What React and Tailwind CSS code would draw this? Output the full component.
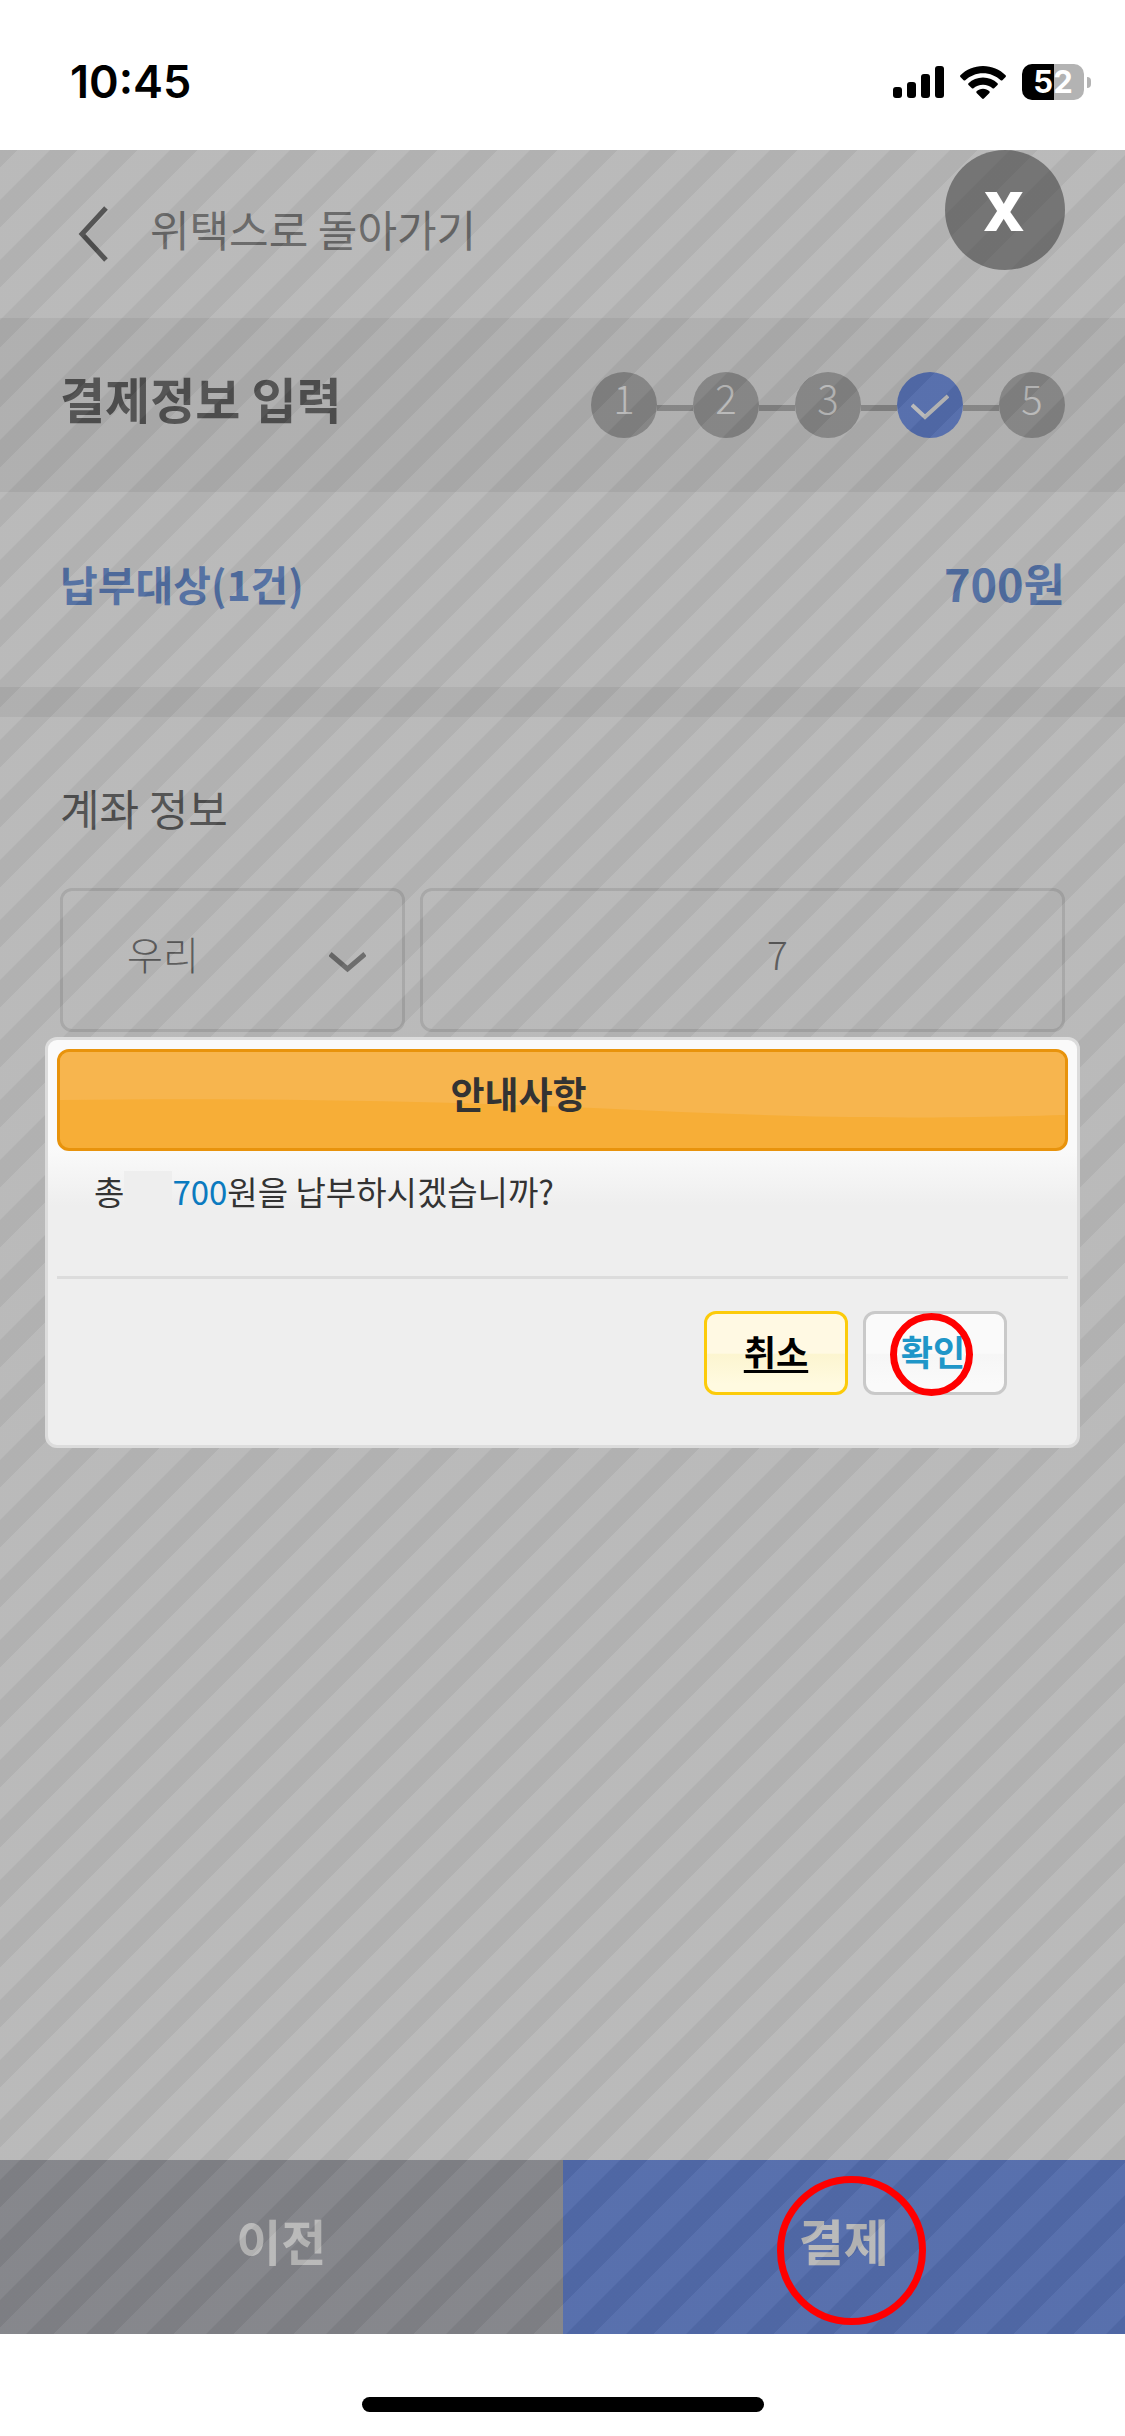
import React, { useState } from 'react';

const banks = ['우리', '국민', '신한', '하나', '농협'];
const steps = [1, 2, 3, 4, 5];
const currentStep = 4;

function StatusBar() {
  return (
    <div className="flex h-[150px] items-center justify-between bg-white pt-[14px] pl-[70px] pr-[34px] text-black">
      <span className="font-['Inter',sans-serif] text-[45px] leading-[48px] font-semibold">10:45</span>
      <div className="flex items-center gap-4">
        <svg className="h-[32px] w-[51px]" viewBox="0 0 51 32" fill="currentColor">
          <rect x="0" y="21" width="9" height="11" rx="3" />
          <rect x="14" y="16" width="9" height="16" rx="3" />
          <rect x="28" y="8" width="9" height="24" rx="3" />
          <rect x="42" y="0" width="9" height="32" rx="3" />
        </svg>
        <svg className="h-[33px] w-[46px]" viewBox="0 0 46 33" fill="currentColor">
          <path d="M23 0C14.200 0 6.200 3.500.4 9.200c-.5.500-.5 1.200 0 1.700l3.200 3.300c.5.500 1.200.5 1.700 0C9.900 9.900 16.100 7.200 23 7.200s13.100 2.700 17.700 7c.5.500 1.200.5 1.700 0l3.200-3.300c.5-.5.5-1.200 0-1.700C39.800 3.500 31.800 0 23 0z" />
          <path d="M23 11.500c-5.600 0-10.700 2.200-14.500 5.700-.5.500-.5 1.200 0 1.700l3.400 3.400c.5.400 1.100.4 1.600 0 2.500-2.300 5.800-3.600 9.500-3.600s7 1.300 9.500 3.600c.5.400 1.100.4 1.600 0l3.400-3.400c.5-.5.5-1.200 0-1.700-3.800-3.500-8.900-5.700-14.500-5.700z" />
          <path d="M23 22.800c-2.500 0-4.700.9-6.400 2.500-.5.500-.5 1.100 0 1.600l5.500 5.600c.5.500 1.300.5 1.800 0l5.500-5.600c.5-.5.5-1.100 0-1.600-1.700-1.600-3.900-2.500-6.400-2.500z" />
        </svg>
        <div className="flex items-center gap-[3px]">
          <div className="flex h-[36px] w-[62px] items-center justify-center rounded-[10px] bg-[linear-gradient(90deg,#000_52%,#b3b3b3_52%)] font-['Inter',sans-serif] text-[31px] leading-[36px] font-bold text-white">
            52
          </div>
          <div className="h-[11px] w-[4px] rounded-r-full bg-[#b3b3b3]" />
        </div>
      </div>
    </div>
  );
}

function Steps() {
  return (
    <ol className="flex items-center">
      {steps.map((step) => (
        <li key={step} className="flex items-center">
          {step > 1 && <span className="mt-[6px] h-[6px] w-[36px] bg-[#959595]" />}
          <span
            className={`flex h-[66px] w-[66px] justify-center rounded-full text-[40px] leading-[50px] font-light text-white ${
              step === currentStep ? 'items-center bg-[#3969e4]' : 'bg-[#959595]'
            }`}
          >
            {step === currentStep ? (
              <svg className="mt-[4px] h-[26px] w-[38px]" viewBox="0 0 38 26" fill="none" stroke="currentColor" strokeWidth="4">
                <path d="M1 11L14 23L37 2" />
              </svg>
            ) : (
              step
            )}
          </span>
        </li>
      ))}
    </ol>
  );
}

function ConfirmDialog({ onClose }) {
  return (
    <div
      role="dialog"
      aria-labelledby="dialog-title"
      className="w-full rounded-xl border-[3px] border-[#dcdcdc] bg-[linear-gradient(180deg,#fafafa_27%,#eee_41%)] p-[9px]"
    >
      <div className="relative flex h-[102px] justify-center overflow-hidden rounded-xl border-[3px] border-[#e8930c] bg-[#f7ae37] pr-[88px]">
        {/* Glossy top half */}
        <svg className="absolute inset-0 h-full w-full" viewBox="0 0 1000 96" preserveAspectRatio="none">
          <path d="M0 0H1000V63C760 70 640 60 480 54C330 48 160 46 0 48Z" fill="#f7b54e" />
        </svg>
        <h2 id="dialog-title" className="relative text-[37px] leading-[82px] font-bold text-[#333]">
          안내사항
        </h2>
      </div>

      <p className="flex items-center border-b-[3px] border-[#dcdcdc] pt-5 pb-[65px] pl-[37px] text-[33px] leading-[40px] text-[#333]">
        총<span className="h-[40px] w-12 bg-[#eee]" />
        <span className="text-[#0b7abf]">700</span>원을 납부하시겠습니까?
      </p>

      <div className="flex justify-end gap-[15px] pt-8 pr-[61px] pb-[41px]">
        <button
          type="button"
          onClick={onClose}
          className="h-[84px] w-[144px] rounded-xl border-[3px] border-[#fccb0a] bg-[linear-gradient(180deg,#fff9e3_50%,#fcf5d0_52%,#fffae0_90%)] pb-1 text-[35px] leading-[40px] font-bold text-black underline decoration-[3px] underline-offset-[4px]"
        >
          취소
        </button>
        <button
          type="button"
          className="relative h-[84px] w-[144px] rounded-xl border-[3px] border-[#c9c9c9] bg-[linear-gradient(180deg,#fafafa_50%,#f6f6f6_52%,#fafafa_90%)] pr-1 pb-1 text-[35px] leading-[40px] font-bold text-[#1f96c8]"
        >
          확인
          <span className="absolute -top-px left-6 h-[83px] w-[83px] rounded-full border-[7px] border-[#f00]" />
        </button>
      </div>
    </div>
  );
}

function App() {
  const [bank, setBank] = useState('우리');
  const [account, setAccount] = useState('7');
  const [open, setOpen] = useState(true);

  return (
    <div className="flex min-h-screen flex-col bg-white font-['Noto_Sans_CJK_KR',sans-serif]">
      <StatusBar />

      <div className="relative flex flex-1 flex-col">
        {/* Header */}
        <header className="flex h-[168px] items-center px-[78px]">
          <a href="#" className="flex items-center gap-[42px] text-[43px] leading-[60px] text-[#616161]">
            <svg className="h-[56px] w-[30px] text-[#333]" viewBox="0 0 30 56" fill="none" stroke="currentColor" strokeWidth="5">
              <path d="M28 2L4 28L28 54" />
            </svg>
            <span className="pb-3">위택스로 돌아가기</span>
          </a>
        </header>

        {/* Title + steps */}
        <div className="flex h-[174px] items-center justify-between bg-[#eaeaea] px-[60px]">
          <h1 className="pb-3.5 text-[49px] leading-[60px] font-bold text-[#333]">결제정보 입력</h1>
          <Steps />
        </div>

        {/* Amount */}
        <div className="flex h-[195px] items-center justify-between px-[60px] pb-3.5 leading-[60px] font-bold text-[#346dd0]">
          <span className="text-[41px]">납부대상(1건)</span>
          <span className="text-[45px]">700원</span>
        </div>
        <div className="h-[30px] bg-[#eaeaea]" />

        {/* Account form */}
        <main className="flex-1 px-[60px] pt-[60px]">
          <label htmlFor="account" className="block text-[43px] leading-[60px] text-[#333]">
            계좌 정보
          </label>
          <div className="mt-[51px] flex gap-[15px]">
            <div className="relative w-[345px]">
              <select
                aria-label="은행"
                value={bank}
                onChange={(e) => setBank(e.target.value)}
                className="h-[144px] w-full appearance-none rounded-xl border-[3px] border-[#dadada] bg-transparent pb-3.5 pl-[64px] text-[39px] font-light text-[#444]"
              >
                {banks.map((name) => (
                  <option key={name}>{name}</option>
                ))}
              </select>
              <svg
                className="pointer-events-none absolute top-[64px] right-[39px] h-[21px] w-[37px] text-[#666]"
                viewBox="0 0 37 21"
                fill="none"
                stroke="currentColor"
                strokeWidth="5"
              >
                <path d="M1 2L18.500 17L36 2" />
              </svg>
            </div>
            <input
              id="account"
              value={account}
              onChange={(e) => setAccount(e.target.value)}
              className="h-[144px] min-w-0 flex-1 rounded-xl border-[3px] border-[#dadada] bg-transparent pb-3.5 pl-[70px] text-center text-[39px] font-light text-[#444]"
            />
          </div>
        </main>

        {/* Bottom buttons */}
        <div className="grid h-[174px] grid-cols-2 text-[49px] font-bold text-white">
          <button type="button" className="bg-[#9597a1] pb-3.5">
            이전
          </button>
          <button type="button" className="bg-[#3969e4] pb-3.5">
            결제
          </button>
        </div>

        {/* Striped overlay */}
        {open && (
          <div className="absolute inset-0 flex items-center justify-center bg-[linear-gradient(135deg,#65656581_14.2%,#77777781_14.8%,#77777781_41.4%,#65656581_42%,#65656581_64.2%,#77777781_64.8%,#77777781_91.4%,#65656581_92%)] bg-[length:60px_60px] px-[45px]">
            <button
              type="button"
              aria-label="닫기"
              onClick={() => setOpen(false)}
              className="absolute top-0 right-[60px] h-[120px] w-[120px] rounded-full bg-[#222]/45 pr-0.5 font-['Noto_Sans',sans-serif] text-[55px] leading-[120px] font-black text-white"
            >
              X
            </button>
            <ConfirmDialog onClose={() => setOpen(false)} />
          </div>
        )}

        <span className="pointer-events-none absolute right-[199px] bottom-[9px] h-[149px] w-[149px] rounded-full border-[7px] border-[#f00]" />
      </div>

      <div className="flex h-[102px] justify-center pt-[63px]">
        <div className="h-[15px] w-[402px] rounded-full bg-black" />
      </div>
    </div>
  );
}

export default App;
